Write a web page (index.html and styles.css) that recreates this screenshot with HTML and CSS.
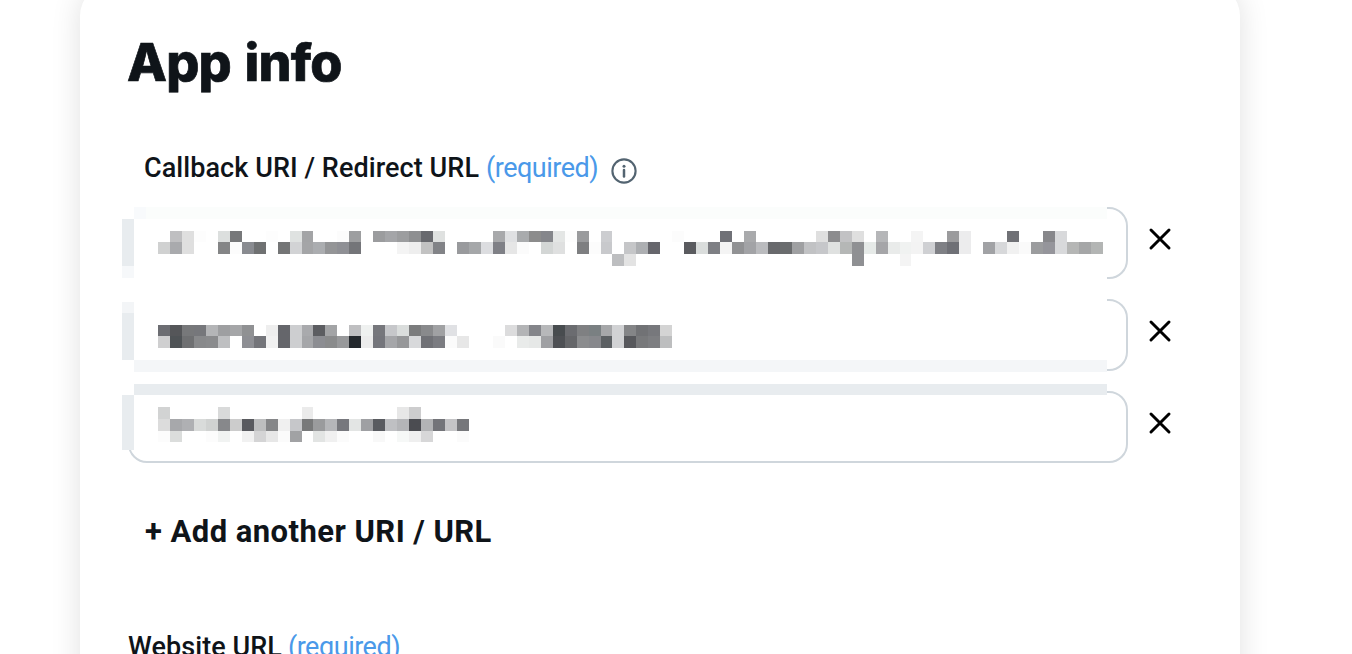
FILE: index.html
```html
<!DOCTYPE html>
<html lang="en">
<head>
<meta charset="utf-8">
<title>App info</title>
<link rel="stylesheet" href="styles.css">
</head>
<body>
<main class="card">
  <h1 class="title"><span>App info</span></h1>
  <div class="label label-callback"><span class="label-text">Callback URI / Redirect URL</span><span class="required">(required)</span>
    <svg class="info" viewBox="0 0 28 28" width="28" height="28" fill="none"><circle cx="14" cy="14" r="11.6" stroke="#536471" stroke-width="2.1"/><circle cx="14" cy="9.2" r="1.5" fill="#536471"/><path d="M14 13v6.6" stroke="#536471" stroke-width="2.5" stroke-linecap="round"/></svg>
  </div>
  <div class="fields">
    <div class="row"><div class="field"></div><svg class="close" viewBox="0 0 24 24" width="24" height="24"><path d="M3 3l18 18M21 3L3 21"/></svg></div>
    <div class="row"><div class="field"></div><svg class="close" viewBox="0 0 24 24" width="24" height="24"><path d="M3 3l18 18M21 3L3 21"/></svg></div>
    <div class="row"><div class="field"></div><svg class="close" viewBox="0 0 24 24" width="24" height="24"><path d="M3 3l18 18M21 3L3 21"/></svg></div>
    <svg class="mosaic" id="mosaic" width="986" height="244"></svg>
  </div>
  <div class="add"><span>+ Add another URI / URL</span></div>
  <div class="label label-website"><span class="label-text">Website URL</span><span class="required">(required)</span></div>
</main>
<script src="mosaic.js"></script>
</body>
</html>
```
FILE: mosaic.js
```js
// Pixelated redaction over the field values. Each run: [row, first column, colours].
const CW = 11.96, CH = 11.77, WIDTH = 985;
const svg = document.getElementById('mosaic');
function rect(x, y, w, h, fill) {
  const r = document.createElementNS('http://www.w3.org/2000/svg', 'rect');
  r.setAttribute('x', x); r.setAttribute('y', y);
  r.setAttribute('width', w); r.setAttribute('height', h);
  r.setAttribute('fill', fill);
  svg.appendChild(r);
}
const px = c => Math.round((c + 3) * CW + 0.1);
const py = k => Math.round(k * CH);
rect(0, 0, WIDTH, 243, '#fff');
rect(12, 0, WIDTH - 12, 12, '#fbfdfc');
rect(12, 0, 12, 12, '#f8fafc');
rect(0, 12, 12, 47, '#e8ecef');
rect(0, 59, 12, 12, '#f6f8fa');
rect(0, 95, 12, 11, '#f3f5f7');
rect(0, 106, 12, 47, '#e8ecef');
rect(12, 153, WIDTH - 12, 12, '#f4f6f8');
rect(12, 177, WIDTH - 12, 11, '#e8ecef');
rect(0, 188, 12, 55, '#e8ecef');
const runs = [
  [2, 1, 'bfbfc1 dfdfdf fdfdfd - dcdfde 77787a - - fdfdfd - dfe2e1 a3a4a6 - - fcfcfc 9d9ea0 - 9b9c9e a4a5a8 9c9d9f 8e8f91 68696e dfe1e0'],
  [2, 28, 'a8a9ab dfe0e2 a9abad 8c8c8c 85868b e4e6e5 fdfdfd 9a9b9d - cccdd0 - - - - - fcfcfc - - - 707177 - a9aaac'],
  [2, 55, 'dfdfdf 8c8c8e c2c2c4 dfdfdf - b5b6b8 - - f4f4f4 - - 9b9b9d ececed - - - 707176 - - 87878b d8d9db'],
  [3, 0, 'd0d1d1 a9aaad dfdfdf - - 848586 fcfcfc 898b90 6f7172 - 747576 d2d3d5 a4a5a7 abadb0 949597 8f9095 747579 - - - f4f4f4 eeeeee c2c2c2 828387'],
  [3, 25, '999a9d a5a7a9 dcdde0 7f8086 e6e6e6 fbfbfb - d3d6d5 dfe0e0 - 7e7f81 fcfcfc c8c9cc - c5c6c8 adafb2 66666c - - 5a5b5f dadddc 7e7f84 f4f4f4 919294 a2a3a6 babbbe 68696c'],
  [3, 52, '6a6c6e 9fa0a2 c1c2c4 c6c7ca dfe1e0 b5b7b6 8f9093 e6eae8 a5a5a8 e9ebea f0f2f1 f3f3f3 cfd0d3 7f8085 6f7076 ececed - a1a2a5 d7d8da f1f1f1 fafafa 9b9c9e 95959b d8d9db b5b6b5 a5a6a7 b3b5b4'],
  [4, 38, 'bdbec0 e3e3e3'], [4, 58, '8f9093'], [4, 62, 'f4f4f4'],
  [10, 0, '6c6d72 555659 77787a 76777b b4b5b7 9e9fa1 a5a6a8 909193 - eeeeee 65666b cdced0 a9aaad 5c5d61 a3a4a6 - bfbfc1 eff1f0 76777c c6c7ca dadddc 7b7c7d 898a8c a0a1a3 e0e1e4'],
  [10, 29, 'dcdcdd b3b4b6 84858a b7b8ba 484c4f 6b6c70 7f8082 7a8082 a6a7a9 d1d2d4 848587 717275 77787c d4d4d4'],
  [11, 0, 'cfcfd0 4f5356 6f7072 88898b 8a8b8d bebfc1 - 8e8f94 74757a f1f1f1 65666b cdced0 a5a6a9 8c8d92 8a8b8c 98999b 24282d ececec 74757b a5a6a9 969799 d8d9db 707176 7b7c81 fbfbfb e7e7e7'],
  [11, 28, 'fafafa - e9ebea e6e8e7 9fa0a3 4e5054 656669 8b8c8e 87888c 5c6063 d1d2d4 57585c 78797b 7d7e81 bdbebf'],
  [17, 0, 'd2d3d3 - - - - d9dada - - - - - - ebebeb - - - - - - - e7e7e7 cdcdce'],
  [18, 0, 'dcdcdc a7a8ab afb0b3 d9dbda d0d2d1 87888b cccccc 595a5f bdbebf 858688 f0f0f0 c6c7ca 78797a 9a9b9d b5b6b9 77787d e3e5e4 9fa0a3 595b60 bfc0c3 b4b5b8 4b4c51 b2b3b5 737479 c4c4c6 76777b'],
  [19, 0, 'fcfcfc dbdddc - - fcfcfc f1f3f2 - f1f1f1 d4d4d5 e7e7e7 fbfbfb a1a2a4 - e2e4e3 f0f0f0 fbfbfb - - f8f8f8 - f6f8f7 efefef d7d7d8 - - fbfbfb']
];
for (const [k, start, list] of runs) {
  list.split(' ').forEach((c, i) => {
    if (c === '-') return;
    const x = px(start + i), y = py(k);
    rect(x, y, px(start + i + 1) - x, py(k + 1) - y, '#' + c);
  });
}
```
FILE: styles.css
```css
* { box-sizing: border-box; }
html { overflow: hidden; }
body { margin: 0; height: 654px; overflow: hidden; background: #fff; color: #0f1419; font-family: Roboto, "Liberation Sans", sans-serif; }
.card { width: 1160px; height: 760px; margin: -16px 0 0 80px; padding: 45px 48px 0; border-radius: 32px; background: #fff; box-shadow: 0 0 30px rgba(0, 0, 0, 0.12); }
.title { margin: 0 0 0 -1px; height: 68px; line-height: 68px; font-family: Inter, sans-serif; font-size: 52px; font-weight: 800; letter-spacing: -0.8px; word-spacing: 3px; white-space: nowrap; -webkit-text-stroke: 0.7px #0f1419; }
.label { display: flex; align-items: center; height: 36px; font-size: 27px; line-height: 36px; white-space: nowrap; }
.label-text { font-weight: 500; margin-right: 7px; letter-spacing: 0.07px; }
.required { color: #4a99e9; letter-spacing: -0.5px; }
.label-callback { margin-top: 53px; padding-left: 16px; }
.info { margin: 6px 0 0 12px; }
.fields { position: relative; display: flex; flex-direction: column; gap: 20px; margin-top: 21px; }
.row { display: flex; align-items: center; gap: 20px; height: 72px; }
.field { width: 1000px; height: 72px; border: 2px solid #cfd6dc; border-radius: 19px; }
.close { margin-top: -8px; fill: none; stroke: #000; stroke-width: 3; stroke-linecap: round; }
.mosaic { position: absolute; left: -6px; top: 0; }
.add { margin: 48px 0 0 17px; height: 42px; line-height: 42px; font-size: 31px; font-weight: 700; letter-spacing: 0.45px; white-space: nowrap; }
.label-website { margin-top: 76px; }
.label-website .label-text { margin-right: 6px; }
```
